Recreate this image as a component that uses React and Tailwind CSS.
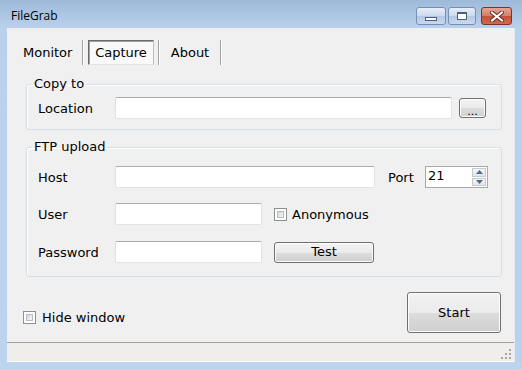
import React from 'react';

const FONT = "font-['DejaVu_Sans',sans-serif] text-[13px] text-black";

function TextBox({ className = '', value = '' }) {
  return (
    <div
      className={`h-[22px] bg-white border border-[#e2e3ea] border-t-[#abadb3] border-l-[#dbdfe6] rounded-[2px] flex items-center px-[2px] ${className}`}
    >
      {value}
    </div>
  );
}

function PushButton({ className = '', children }) {
  return (
    <div
      className={`border border-[#707070] rounded-[3px] bg-[linear-gradient(#f2f2f2_0%,#ebebeb_50%,#dddddd_51%,#cfcfcf_100%)] shadow-[inset_0_0_0_1px_#fcfcfc] flex items-center justify-center ${className}`}
    >
      {children}
    </div>
  );
}

function CheckBox() {
  return (
    <div className="w-[13px] h-[13px] border border-[#8e8f8f] bg-white p-[2px]">
      <div className="w-full h-full bg-[linear-gradient(135deg,#d3d6db,#f8f8f8)] border border-[#b8bcc2]" />
    </div>
  );
}

function Legend({ children }) {
  return <legend className="ml-[5px] px-[2px] leading-[16px]">{children}</legend>;
}

function TitleButtons() {
  return (
    <div className="flex mt-[7px] mr-[10px] gap-[2px]">
      <div className="w-[30px] h-[18px] rounded-[3px] border border-[#7590b6] bg-[linear-gradient(#e6eef8_0%,#cbdaee_50%,#b3c8e3_51%,#c9daf0_100%)] flex items-center justify-center">
        <div className="w-[12px] h-[4px] mt-[5px] bg-white border border-[#4b5f7c]" />
      </div>
      <div className="w-[28px] h-[18px] rounded-[3px] border border-[#7590b6] bg-[linear-gradient(#e6eef8_0%,#cbdaee_50%,#b3c8e3_51%,#c9daf0_100%)] flex items-center justify-center">
        <div className="w-[10px] h-[8px] border border-t-2 border-[#4b5f7c] bg-white" />
      </div>
      <div className="ml-[3px] w-[31px] h-[18px] rounded-[3px] border border-[#7d3128] bg-[linear-gradient(#e8a493_0%,#d27e69_50%,#c4503a_51%,#d06b4f_100%)] flex items-center justify-center">
        <svg width="14" height="11" viewBox="0 0 14 11">
          <path d="M2 1.5 L12 9.5 M12 1.5 L2 9.5" stroke="#5a2a22" strokeWidth="4" strokeLinecap="square" />
          <path d="M2 1.5 L12 9.5 M12 1.5 L2 9.5" stroke="#ffffff" strokeWidth="2" strokeLinecap="square" />
        </svg>
      </div>
    </div>
  );
}

function Separator() {
  return <div className="w-[2px] h-[25px] border-l border-[#a0a0a0] border-r border-r-white" />;
}

function Spinner() {
  return (
    <div className="w-[63px] h-[22px] border border-[#a9a9a9] bg-white flex items-stretch">
      <div className="flex-1 pl-[2px] leading-[18px]">21</div>
      <div className="flex flex-col gap-px py-px pr-px w-[15px]">
        <div className="flex-1 border border-[#c5c9d0] bg-[linear-gradient(#f4f5f7,#e2e5ea)] flex items-center justify-center">
          <svg width="7" height="4" viewBox="0 0 7 4"><path d="M0 4 L3.5 0 L7 4Z" fill="#4f6a9a" /></svg>
        </div>
        <div className="flex-1 border border-[#c5c9d0] bg-[linear-gradient(#f4f5f7,#e2e5ea)] flex items-center justify-center">
          <svg width="7" height="4" viewBox="0 0 7 4"><path d="M0 0 L7 0 L3.5 4Z" fill="#4f6a9a" /></svg>
        </div>
      </div>
    </div>
  );
}

export default function App() {
  return (
    <div className={`w-[522px] h-[369px] flex flex-col bg-[#b9d1ea] ${FONT}`}>
      {/* title bar */}
      <div className="h-[28px] flex justify-between bg-[linear-gradient(#9fb9d9,#b9d1ec)]">
        <div className="pl-[11px] pt-[7px] text-[12px] font-['Open_Sans',sans-serif] leading-[18px]">FileGrab</div>
        <TitleButtons />
      </div>

      <div className="flex flex-1">
        <div className="w-[7px] bg-[linear-gradient(#b9d1ec,#bcd4ee)]" />
        <div className="w-[507px] h-[334px] bg-[#f0f0f0] flex flex-col">
          {/* tabs */}
          <div className="flex items-center h-[25px] mt-[12px]">
            <div className="ml-[16px] w-[59px]">Monitor</div>
            <Separator />
            <div className="ml-[4px] w-[66px] h-[25px] flex items-center justify-center bg-[#f9f9f9] border border-[#6b6b6b] border-r-[#bdbdbd] border-b-[#e4e4e4] shadow-[inset_1px_1px_0_#a0a0a0]">
              Capture
            </div>
            <div className="w-[4px]" />
            <Separator />
            <div className="w-[60px] text-center">About</div>
            <Separator />
          </div>

          {/* copy to */}
          <fieldset className="ml-[19px] mt-[11px] w-[476px] border border-[#d5dfe5] rounded-[3px] shadow-[inset_1px_1px_0_#ffffff]">
            <Legend>Copy to</Legend>
            <div className="flex items-center pt-[5px] pb-[10px]">
              <div className="ml-[11px] w-[77px] mt-[2px]">Location</div>
              <TextBox className="w-[337px]" />
              <PushButton className="ml-[7px] w-[27px] h-[20px] text-[11px] leading-none">
                <span className="mt-[6px]">...</span>
              </PushButton>
            </div>
          </fieldset>

          {/* ftp upload */}
          <fieldset className="ml-[19px] mt-[9px] w-[476px] border border-[#d5dfe5] rounded-[3px] shadow-[inset_1px_1px_0_#ffffff]">
            <Legend>FTP upload</Legend>
            <div className="flex flex-col pt-[11px] pb-[13px]">
              <div className="flex items-center">
                <div className="ml-[11px] w-[77px] mt-[2px]">Host</div>
                <TextBox className="w-[260px]" />
                <div className="ml-[13px] w-[37px] mt-[2px]">Port</div>
                <Spinner />
              </div>
              <div className="flex items-center mt-[15px]">
                <div className="ml-[11px] w-[77px] mt-[2px]">User</div>
                <TextBox className="w-[147px]" />
                <div className="ml-[12px]"><CheckBox /></div>
                <div className="ml-[5px] mt-[2px]">Anonymous</div>
              </div>
              <div className="flex items-center mt-[16px]">
                <div className="ml-[11px] w-[77px] mt-[2px]">Password</div>
                <TextBox className="w-[147px]" />
                <PushButton className="ml-[12px] w-[100px] h-[21px]">Test</PushButton>
              </div>
            </div>
          </fieldset>

          {/* bottom */}
          <div className="flex justify-between items-start mt-[15px]">
            <div className="flex items-center ml-[16px] mt-[17px] h-[16px]">
              <CheckBox />
              <div className="ml-[6px] mt-[2px]">Hide window</div>
            </div>
            <PushButton className="mr-[13px] w-[94px] h-[41px]">Start</PushButton>
          </div>

          {/* status bar */}
          <div className="mt-auto h-[20px] border-t border-[#a0a0a0] bg-[#f0eded] border-b border-b-white flex justify-end items-end pr-[2px] pb-[1px]">
            <svg width="11" height="11" viewBox="0 0 11 11">
              <rect x="8" y="0" width="2" height="2" fill="#a7a7a7" />
              <rect x="4" y="4" width="2" height="2" fill="#a7a7a7" />
              <rect x="8" y="4" width="2" height="2" fill="#a7a7a7" />
              <rect x="0" y="8" width="2" height="2" fill="#a7a7a7" />
              <rect x="4" y="8" width="2" height="2" fill="#a7a7a7" />
              <rect x="8" y="8" width="2" height="2" fill="#a7a7a7" />
            </svg>
          </div>
        </div>
        <div className="w-[8px] border-l border-[#e2ecf7] bg-[#b9d1ea]" />
      </div>
      <div className="h-[7px] bg-[#bcd4ee]" />
    </div>
  );
}
